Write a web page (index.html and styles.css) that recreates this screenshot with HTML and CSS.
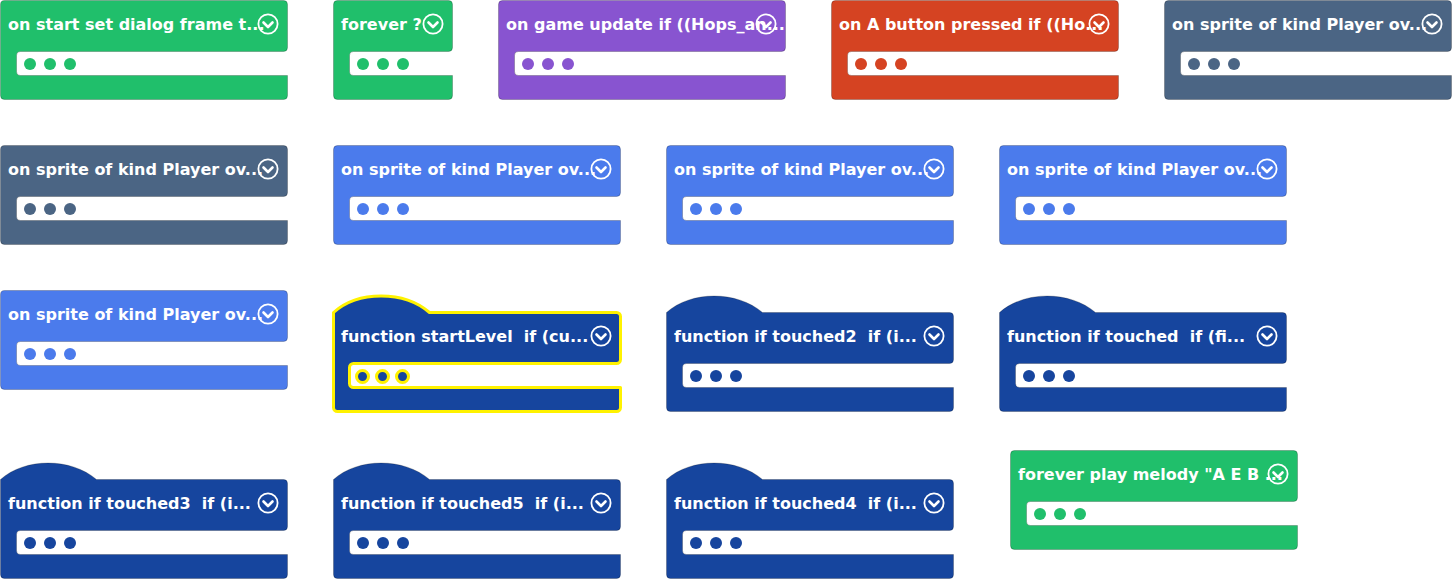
FILE: index.html
```html
<!DOCTYPE html>
<html lang="en">
<head>
<meta charset="utf-8">
<title>Blocks workspace</title>
<link rel="stylesheet" href="styles.css">
</head>
<body>
<main class="workspace">

  <!-- Row 1 -->
  <div class="block loops" style="left:0;top:0">
    <svg class="shape" width="288" height="100"><path d="M0.5,4.5 A4,4 0 0 1 4.5,0.5 H283.5 A4,4 0 0 1 287.5,4.5 V47.5 A4,4 0 0 1 283.5,51.5 H20.5 A4,4 0 0 0 16.5,55.5 V71.5 A4,4 0 0 0 20.5,75.5 H287.5 V95.5 A4,4 0 0 1 283.5,99.5 H4.5 A4,4 0 0 1 0.5,95.5 Z"/></svg>
    <div class="head"><span class="label">on start set dialog frame t...</span>
      <svg class="chev" width="22" height="22" viewBox="0 0 22 22"><circle cx="11" cy="11" r="9.6"/><polyline points="6.5,9.5 11,14 15.5,9.5"/></svg></div>
    <div class="slot"><i class="dot"></i><i class="dot"></i><i class="dot"></i></div>
  </div>

  <div class="block loops narrow" style="left:333px;top:0">
    <svg class="shape" width="120" height="100"><path d="M0.5,4.5 A4,4 0 0 1 4.5,0.5 H115.5 A4,4 0 0 1 119.5,4.5 V47.5 A4,4 0 0 1 115.5,51.5 H20.5 A4,4 0 0 0 16.5,55.5 V71.5 A4,4 0 0 0 20.5,75.5 H119.5 V95.5 A4,4 0 0 1 115.5,99.5 H4.5 A4,4 0 0 1 0.5,95.5 Z"/></svg>
    <div class="head"><span class="label">forever ?</span>
      <svg class="chev" width="22" height="22" viewBox="0 0 22 22"><circle cx="11" cy="11" r="9.6"/><polyline points="6.5,9.5 11,14 15.5,9.5"/></svg></div>
    <div class="slot"><i class="dot"></i><i class="dot"></i><i class="dot"></i></div>
  </div>

  <div class="block game" style="left:498px;top:0">
    <svg class="shape" width="288" height="100"><path d="M0.5,4.5 A4,4 0 0 1 4.5,0.5 H283.5 A4,4 0 0 1 287.5,4.5 V47.5 A4,4 0 0 1 283.5,51.5 H20.5 A4,4 0 0 0 16.5,55.5 V71.5 A4,4 0 0 0 20.5,75.5 H287.5 V95.5 A4,4 0 0 1 283.5,99.5 H4.5 A4,4 0 0 1 0.5,95.5 Z"/></svg>
    <div class="head"><span class="label">on game update if ((Hops_an...</span>
      <svg class="chev" width="22" height="22" viewBox="0 0 22 22"><circle cx="11" cy="11" r="9.6"/><polyline points="6.5,9.5 11,14 15.5,9.5"/></svg></div>
    <div class="slot"><i class="dot"></i><i class="dot"></i><i class="dot"></i></div>
  </div>

  <div class="block ctrl" style="left:831px;top:0">
    <svg class="shape" width="288" height="100"><path d="M0.5,4.5 A4,4 0 0 1 4.5,0.5 H283.5 A4,4 0 0 1 287.5,4.5 V47.5 A4,4 0 0 1 283.5,51.5 H20.5 A4,4 0 0 0 16.5,55.5 V71.5 A4,4 0 0 0 20.5,75.5 H287.5 V95.5 A4,4 0 0 1 283.5,99.5 H4.5 A4,4 0 0 1 0.5,95.5 Z"/></svg>
    <div class="head"><span class="label">on A button pressed if ((Ho...</span>
      <svg class="chev" width="22" height="22" viewBox="0 0 22 22"><circle cx="11" cy="11" r="9.6"/><polyline points="6.5,9.5 11,14 15.5,9.5"/></svg></div>
    <div class="slot"><i class="dot"></i><i class="dot"></i><i class="dot"></i></div>
  </div>

  <div class="block sprite" style="left:1164px;top:0">
    <svg class="shape" width="288" height="100"><path d="M0.5,4.5 A4,4 0 0 1 4.5,0.5 H283.5 A4,4 0 0 1 287.5,4.5 V47.5 A4,4 0 0 1 283.5,51.5 H20.5 A4,4 0 0 0 16.5,55.5 V71.5 A4,4 0 0 0 20.5,75.5 H287.5 V95.5 A4,4 0 0 1 283.5,99.5 H4.5 A4,4 0 0 1 0.5,95.5 Z"/></svg>
    <div class="head"><span class="label">on sprite of kind Player ov...</span>
      <svg class="chev" width="22" height="22" viewBox="0 0 22 22"><circle cx="11" cy="11" r="9.6"/><polyline points="6.5,9.5 11,14 15.5,9.5"/></svg></div>
    <div class="slot"><i class="dot"></i><i class="dot"></i><i class="dot"></i></div>
  </div>

  <!-- Row 2 -->
  <div class="block sprite" style="left:0;top:145px">
    <svg class="shape" width="288" height="100"><path d="M0.5,4.5 A4,4 0 0 1 4.5,0.5 H283.5 A4,4 0 0 1 287.5,4.5 V47.5 A4,4 0 0 1 283.5,51.5 H20.5 A4,4 0 0 0 16.5,55.5 V71.5 A4,4 0 0 0 20.5,75.5 H287.5 V95.5 A4,4 0 0 1 283.5,99.5 H4.5 A4,4 0 0 1 0.5,95.5 Z"/></svg>
    <div class="head"><span class="label">on sprite of kind Player ov...</span>
      <svg class="chev" width="22" height="22" viewBox="0 0 22 22"><circle cx="11" cy="11" r="9.6"/><polyline points="6.5,9.5 11,14 15.5,9.5"/></svg></div>
    <div class="slot"><i class="dot"></i><i class="dot"></i><i class="dot"></i></div>
  </div>

  <div class="block overlap" style="left:333px;top:145px">
    <svg class="shape" width="288" height="100"><path d="M0.5,4.5 A4,4 0 0 1 4.5,0.5 H283.5 A4,4 0 0 1 287.5,4.5 V47.5 A4,4 0 0 1 283.5,51.5 H20.5 A4,4 0 0 0 16.5,55.5 V71.5 A4,4 0 0 0 20.5,75.5 H287.5 V95.5 A4,4 0 0 1 283.5,99.5 H4.5 A4,4 0 0 1 0.5,95.5 Z"/></svg>
    <div class="head"><span class="label">on sprite of kind Player ov...</span>
      <svg class="chev" width="22" height="22" viewBox="0 0 22 22"><circle cx="11" cy="11" r="9.6"/><polyline points="6.5,9.5 11,14 15.5,9.5"/></svg></div>
    <div class="slot"><i class="dot"></i><i class="dot"></i><i class="dot"></i></div>
  </div>

  <div class="block overlap" style="left:666px;top:145px">
    <svg class="shape" width="288" height="100"><path d="M0.5,4.5 A4,4 0 0 1 4.5,0.5 H283.5 A4,4 0 0 1 287.5,4.5 V47.5 A4,4 0 0 1 283.5,51.5 H20.5 A4,4 0 0 0 16.5,55.5 V71.5 A4,4 0 0 0 20.5,75.5 H287.5 V95.5 A4,4 0 0 1 283.5,99.5 H4.5 A4,4 0 0 1 0.5,95.5 Z"/></svg>
    <div class="head"><span class="label">on sprite of kind Player ov...</span>
      <svg class="chev" width="22" height="22" viewBox="0 0 22 22"><circle cx="11" cy="11" r="9.6"/><polyline points="6.5,9.5 11,14 15.5,9.5"/></svg></div>
    <div class="slot"><i class="dot"></i><i class="dot"></i><i class="dot"></i></div>
  </div>

  <div class="block overlap" style="left:999px;top:145px">
    <svg class="shape" width="288" height="100"><path d="M0.5,4.5 A4,4 0 0 1 4.5,0.5 H283.5 A4,4 0 0 1 287.5,4.5 V47.5 A4,4 0 0 1 283.5,51.5 H20.5 A4,4 0 0 0 16.5,55.5 V71.5 A4,4 0 0 0 20.5,75.5 H287.5 V95.5 A4,4 0 0 1 283.5,99.5 H4.5 A4,4 0 0 1 0.5,95.5 Z"/></svg>
    <div class="head"><span class="label">on sprite of kind Player ov...</span>
      <svg class="chev" width="22" height="22" viewBox="0 0 22 22"><circle cx="11" cy="11" r="9.6"/><polyline points="6.5,9.5 11,14 15.5,9.5"/></svg></div>
    <div class="slot"><i class="dot"></i><i class="dot"></i><i class="dot"></i></div>
  </div>

  <!-- Row 3 -->
  <div class="block overlap" style="left:0;top:290px">
    <svg class="shape" width="288" height="100"><path d="M0.5,4.5 A4,4 0 0 1 4.5,0.5 H283.5 A4,4 0 0 1 287.5,4.5 V47.5 A4,4 0 0 1 283.5,51.5 H20.5 A4,4 0 0 0 16.5,55.5 V71.5 A4,4 0 0 0 20.5,75.5 H287.5 V95.5 A4,4 0 0 1 283.5,99.5 H4.5 A4,4 0 0 1 0.5,95.5 Z"/></svg>
    <div class="head"><span class="label">on sprite of kind Player ov...</span>
      <svg class="chev" width="22" height="22" viewBox="0 0 22 22"><circle cx="11" cy="11" r="9.6"/><polyline points="6.5,9.5 11,14 15.5,9.5"/></svg></div>
    <div class="slot"><i class="dot"></i><i class="dot"></i><i class="dot"></i></div>
  </div>

  <div class="block func hat selected" style="left:333px;top:295px">
    <svg class="shape" width="288" height="117"><path d="M0.5,17.5 C25,-4.5 71,-4.5 96.5,17.5 H283.5 A4,4 0 0 1 287.5,21.5 V64.5 A4,4 0 0 1 283.5,68.5 H20.5 A4,4 0 0 0 16.5,72.5 V88.5 A4,4 0 0 0 20.5,92.5 H287.5 V112.5 A4,4 0 0 1 283.5,116.5 H4.5 A4,4 0 0 1 0.5,112.5 Z"/></svg>
    <div class="head"><span class="label">function startLevel  if (cu...</span>
      <svg class="chev" width="22" height="22" viewBox="0 0 22 22"><circle cx="11" cy="11" r="9.6"/><polyline points="6.5,9.5 11,14 15.5,9.5"/></svg></div>
    <div class="slot"><i class="dot"></i><i class="dot"></i><i class="dot"></i></div>
  </div>

  <div class="block func hat" style="left:666px;top:295px">
    <svg class="shape" width="288" height="117"><path d="M0.5,17.5 C25,-4.5 71,-4.5 96.5,17.5 H283.5 A4,4 0 0 1 287.5,21.5 V64.5 A4,4 0 0 1 283.5,68.5 H20.5 A4,4 0 0 0 16.5,72.5 V88.5 A4,4 0 0 0 20.5,92.5 H287.5 V112.5 A4,4 0 0 1 283.5,116.5 H4.5 A4,4 0 0 1 0.5,112.5 Z"/></svg>
    <div class="head"><span class="label">function if touched2  if (i...</span>
      <svg class="chev" width="22" height="22" viewBox="0 0 22 22"><circle cx="11" cy="11" r="9.6"/><polyline points="6.5,9.5 11,14 15.5,9.5"/></svg></div>
    <div class="slot"><i class="dot"></i><i class="dot"></i><i class="dot"></i></div>
  </div>

  <div class="block func hat" style="left:999px;top:295px">
    <svg class="shape" width="288" height="117"><path d="M0.5,17.5 C25,-4.5 71,-4.5 96.5,17.5 H283.5 A4,4 0 0 1 287.5,21.5 V64.5 A4,4 0 0 1 283.5,68.5 H20.5 A4,4 0 0 0 16.5,72.5 V88.5 A4,4 0 0 0 20.5,92.5 H287.5 V112.5 A4,4 0 0 1 283.5,116.5 H4.5 A4,4 0 0 1 0.5,112.5 Z"/></svg>
    <div class="head"><span class="label">function if touched  if (fi...</span>
      <svg class="chev" width="22" height="22" viewBox="0 0 22 22"><circle cx="11" cy="11" r="9.6"/><polyline points="6.5,9.5 11,14 15.5,9.5"/></svg></div>
    <div class="slot"><i class="dot"></i><i class="dot"></i><i class="dot"></i></div>
  </div>

  <!-- Row 4 -->
  <div class="block func hat" style="left:0;top:462px">
    <svg class="shape" width="288" height="117"><path d="M0.5,17.5 C25,-4.5 71,-4.5 96.5,17.5 H283.5 A4,4 0 0 1 287.5,21.5 V64.5 A4,4 0 0 1 283.5,68.5 H20.5 A4,4 0 0 0 16.5,72.5 V88.5 A4,4 0 0 0 20.5,92.5 H287.5 V112.5 A4,4 0 0 1 283.5,116.5 H4.5 A4,4 0 0 1 0.5,112.5 Z"/></svg>
    <div class="head"><span class="label">function if touched3  if (i...</span>
      <svg class="chev" width="22" height="22" viewBox="0 0 22 22"><circle cx="11" cy="11" r="9.6"/><polyline points="6.5,9.5 11,14 15.5,9.5"/></svg></div>
    <div class="slot"><i class="dot"></i><i class="dot"></i><i class="dot"></i></div>
  </div>

  <div class="block func hat" style="left:333px;top:462px">
    <svg class="shape" width="288" height="117"><path d="M0.5,17.5 C25,-4.5 71,-4.5 96.5,17.5 H283.5 A4,4 0 0 1 287.5,21.5 V64.5 A4,4 0 0 1 283.5,68.5 H20.5 A4,4 0 0 0 16.5,72.5 V88.5 A4,4 0 0 0 20.5,92.5 H287.5 V112.5 A4,4 0 0 1 283.5,116.5 H4.5 A4,4 0 0 1 0.5,112.5 Z"/></svg>
    <div class="head"><span class="label">function if touched5  if (i...</span>
      <svg class="chev" width="22" height="22" viewBox="0 0 22 22"><circle cx="11" cy="11" r="9.6"/><polyline points="6.5,9.5 11,14 15.5,9.5"/></svg></div>
    <div class="slot"><i class="dot"></i><i class="dot"></i><i class="dot"></i></div>
  </div>

  <div class="block func hat" style="left:666px;top:462px">
    <svg class="shape" width="288" height="117"><path d="M0.5,17.5 C25,-4.5 71,-4.5 96.5,17.5 H283.5 A4,4 0 0 1 287.5,21.5 V64.5 A4,4 0 0 1 283.5,68.5 H20.5 A4,4 0 0 0 16.5,72.5 V88.5 A4,4 0 0 0 20.5,92.5 H287.5 V112.5 A4,4 0 0 1 283.5,116.5 H4.5 A4,4 0 0 1 0.5,112.5 Z"/></svg>
    <div class="head"><span class="label">function if touched4  if (i...</span>
      <svg class="chev" width="22" height="22" viewBox="0 0 22 22"><circle cx="11" cy="11" r="9.6"/><polyline points="6.5,9.5 11,14 15.5,9.5"/></svg></div>
    <div class="slot"><i class="dot"></i><i class="dot"></i><i class="dot"></i></div>
  </div>

  <div class="block loops" style="left:1010px;top:450px">
    <svg class="shape" width="288" height="100"><path d="M0.5,4.5 A4,4 0 0 1 4.5,0.5 H283.5 A4,4 0 0 1 287.5,4.5 V47.5 A4,4 0 0 1 283.5,51.5 H20.5 A4,4 0 0 0 16.5,55.5 V71.5 A4,4 0 0 0 20.5,75.5 H287.5 V95.5 A4,4 0 0 1 283.5,99.5 H4.5 A4,4 0 0 1 0.5,95.5 Z"/></svg>
    <div class="head"><span class="label">forever play melody "A E B ...</span>
      <svg class="chev" width="22" height="22" viewBox="0 0 22 22"><circle cx="11" cy="11" r="9.6"/><polyline points="6.5,9.5 11,14 15.5,9.5"/></svg></div>
    <div class="slot"><i class="dot"></i><i class="dot"></i><i class="dot"></i></div>
  </div>

</main>
</body>
</html>
```

FILE: styles.css
```css
html, body {
  margin: 0;
  padding: 0;
  background: #ffffff;
}

.workspace {
  position: relative;
  width: 1452px;
  height: 579px;
  overflow: hidden;
  background: #ffffff;
  font-family: "DejaVu Sans", "Verdana", sans-serif;
}

.block {
  --c: #20bf6b;
  position: absolute;
  width: 288px;
  height: 100px;
  color: #ffffff;
}
.block.narrow { width: 120px; }
.block.hat { height: 117px; }

.loops   { --c: #20bf6b; }
.game    { --c: #8854d0; }
.ctrl    { --c: #d54322; }
.sprite  { --c: #4b6584; }
.overlap { --c: #4b7bec; }
.func    { --c: #16459e; }

.shape {
  position: absolute;
  left: 0;
  top: 0;
  overflow: visible;
}
.shape path {
  fill: var(--c);
  stroke: rgba(0, 0, 0, 0.22);
  stroke-width: 1;
}
.selected .shape path {
  stroke: #fff200;
  stroke-width: 3;
  stroke-linejoin: round;
}

.head {
  position: relative;
  height: 46px;
  padding-top: 2px;
  display: flex;
  align-items: center;
  padding-left: 8px;
}
.hat .head { margin-top: 17px; }

.label {
  font-weight: 700;
  font-size: 16px;
  line-height: 1;
  white-space: pre;
  color: #ffffff;
}

.chev {
  position: absolute;
  right: 9px;
  top: 13px;
  overflow: visible;
}
.chev circle {
  fill: none;
  stroke: #ffffff;
  stroke-width: 1.8;
}
.chev polyline {
  fill: none;
  stroke: #ffffff;
  stroke-width: 2.6;
  stroke-linecap: round;
  stroke-linejoin: round;
}

.slot {
  position: relative;
  margin-top: 4px;
  height: 24px;
  display: flex;
  align-items: center;
  gap: 8px;
  padding-left: 24px;
}
.dot {
  display: block;
  width: 12px;
  height: 12px;
  border-radius: 50%;
  background: var(--c);
}
.selected .slot {
  gap: 5px;
  padding-left: 22px;
}
.selected .dot {
  width: 15px;
  height: 15px;
  box-sizing: border-box;
  border: 3.5px solid #fff200;
}
```
